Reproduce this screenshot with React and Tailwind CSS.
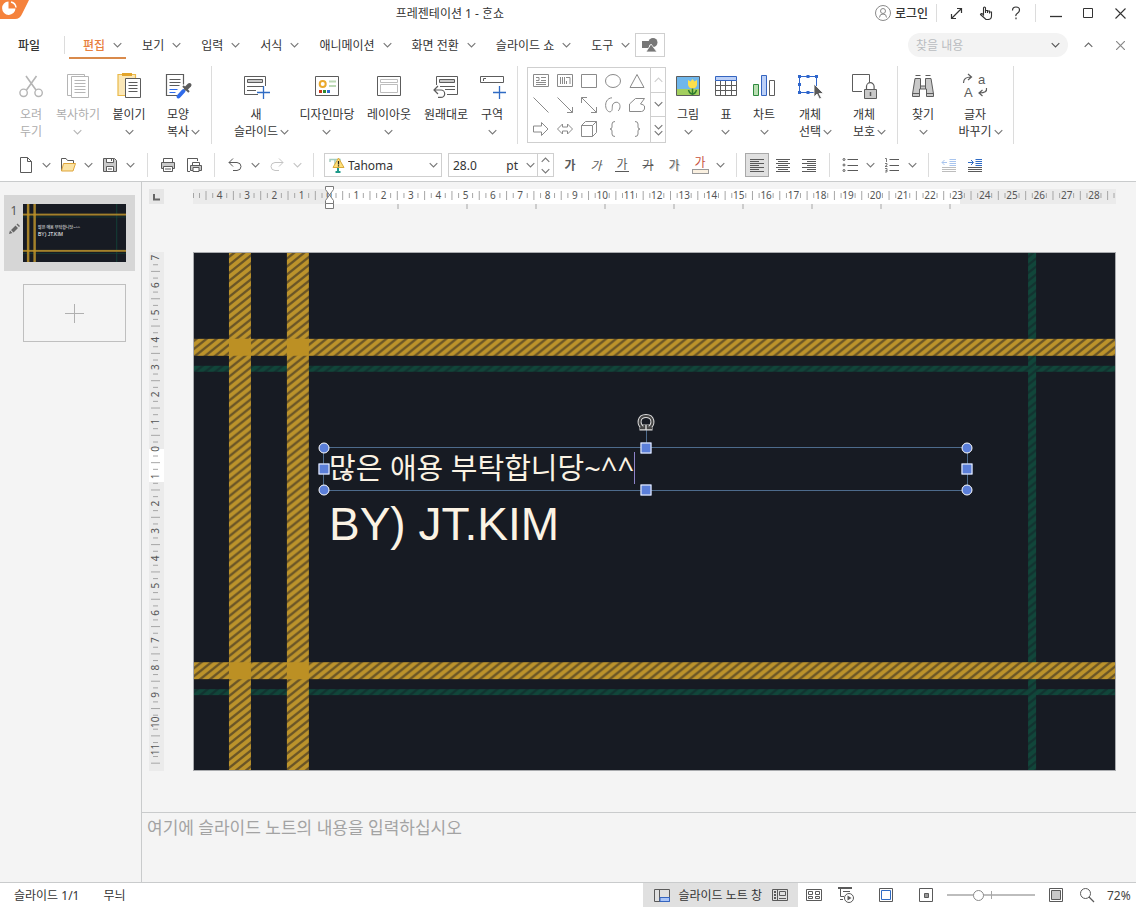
import React, { useState } from 'react';
import clsx from 'clsx';

const CM = 27.32; // one ruler unit in px

function Svg({ w = 16, h = w, className, children }) {
  return (
    <svg
      width={w}
      height={h}
      viewBox={`0 0 ${w} ${h}`}
      fill="none"
      stroke="currentColor"
      className={clsx('shrink-0', className)}
      aria-hidden="true"
    >
      {children}
    </svg>
  );
}

const Chevron = ({ className, up }) => (
  <Svg w={9} h={6} className={className}>
    <path d={up ? 'M.7 4.800l3.800-3.800 3.800 3.800' : 'M.7 1.200l3.800 3.800 3.800-3.800'} strokeWidth="1.1" />
  </Svg>
);

const Sep = ({ className }) => <div className={clsx('w-px shrink-0 bg-[#dcdcdc]', className)} />;

/* ---------- ribbon icons, 30x30 ---------- */

const BigPlus = () => <path d="M16 20.5h13M22.5 14v13" stroke="#2f6bc4" strokeWidth="1.3" />;

const ribbonIcons = {
  cut: (
    <>
      <path d="M10 4l10 14M20.5 4l-10 14" strokeWidth="1.6" />
      <circle cx="7.6" cy="20.8" r="3.7" strokeWidth="1.4" />
      <circle cx="22.6" cy="20.8" r="3.7" strokeWidth="1.4" />
    </>
  ),
  copy: (
    <>
      <path d="M8 23.5H4.5V2.5H21.5V4.5" />
      <path d="M8.5 4.5h17v21h-17z" />
      <path d="M11.5 8.5h11M11.5 11.5h11M11.5 14.5h11M11.5 17.5h11M11.5 20.5h11" />
    </>
  ),
  paste: (
    <>
      <path d="M4 2.5h17.5v21H4z" fill="#fbe8b8" stroke="#eab94a" strokeWidth="1.2" />
      <path d="M8 1h10v3H8z" fill="#e3a52b" stroke="none" />
      <path d="M11.5 6.5h15v19h-15z" fill="#fff" />
      <path d="M14.5 10.5h9M14.5 13.5h9M14.5 16.5h9M14.5 19.5h9" />
    </>
  ),
  format: (
    <>
      <path d="M14 23.5H3.5v-21h17v10" strokeWidth="1.2" />
      <path d="M6.5 7.5h11M6.5 10.5h11M6.5 13.5h10" />
      <path d="M6.5 17.5h8M6.5 20.5h6" stroke="#2f6bea" />
      <path d="M15.5 24.5l5-5.5" stroke="#2f6bea" strokeWidth="4" strokeLinecap="round" />
      <path d="M20 14l6 6" strokeWidth="2" />
      <path d="M23 16.5l3.5-3.5" strokeWidth="4" strokeLinecap="round" />
    </>
  ),
  newSlide: (
    <>
      <path d="M17 22.5H3.5v-18h21V14" />
      <path d="M6.5 7.5h15v3h-15z" fill="#c9c9c9" />
      <path d="M6 14.5h16M6 18.5h9" />
      <BigPlus />
    </>
  ),
  design: (
    <>
      <path d="M3.5 4.5h23v19h-23z" />
      <circle cx="10.7" cy="12" r="3" stroke="#eaa92c" strokeWidth="2" />
      <path d="M17 9.5h7M17 14h7" stroke="#bcd9b4" strokeWidth="2" />
      <g stroke="none">
        <path d="M7 18h3v3H7z" fill="#c8371e" />
        <path d="M11 18h3v3h-3z" fill="#2f8a2f" />
        <path d="M15 18h3v3h-3z" fill="#2f6bd0" />
      </g>
    </>
  ),
  layout: (
    <>
      <path d="M3.5 4.5h23v19h-23z" />
      <path d="M6.5 7.5h17v3h-17zM6.5 12.5h17v8h-17z" stroke="#bdbdbd" />
    </>
  ),
  reset: (
    <>
      <path d="M5.5 13V4.5h21v18H16" />
      <path d="M8.5 7.5h15v3h-15z" fill="#c9c9c9" />
      <path d="M9 14.5h15M14 17.5h10" />
      <path d="M7 14l-4 4 4 4M3 18h7a3.700 3.700 0 010 7.400H7" strokeWidth="1.2" />
    </>
  ),
  section: (
    <>
      <path d="M3.5 4.5h23v6h-23z" />
      <path d="M6.5 9V6.5h2.500" />
      <BigPlus />
    </>
  ),
  picture: (
    <>
      <path d="M3.5 4.5h23v19h-23z" fill="#6fb7ec" />
      <path d="M4 17h22v6H4z" fill="#a3cf5f" stroke="none" />
      <path d="M19.5 15v8M15.5 18c1 3 3 4 4 4s3-1 4-4" stroke="#2d7a2d" strokeWidth="1.5" />
      <path d="M15 8l2.500 1.500 2-2.500 2 2.500L24 8v5q-1 3.500-4.500 3.500T15 13z" fill="#ffe04a" stroke="none" />
    </>
  ),
  table: (
    <>
      <path d="M4.5 8.5v15h21v-15M4.5 13.5h21M4.5 18.5h21M9.5 9v14M14.5 9v14M20.5 9v14" />
      <path d="M4.5 4.5h21v4h-21z" fill="#bcd0f7" stroke="#3565c0" />
    </>
  ),
  chart: (
    <>
      <path d="M4.5 12.5h5v11h-5z" fill="#b9dfb2" stroke="#2f8a3f" />
      <path d="M12.5 3.5h5v20h-5z" fill="#bcd0f7" stroke="#3565c0" />
      <path d="M20.5 8.5h5v15h-5z" />
    </>
  ),
  select: (
    <>
      <path d="M4.5 4.5h17v16h-17z" stroke="#2f66cc" />
      <path
        d="M3 3h3v3H3zM11.5 3h3v3h-3zM20 3h3v3h-3zM3 11h3v3H3zM3 19h3v3H3zM11.5 19h3v3h-3z"
        fill="#2f66cc"
        stroke="none"
      />
      <path d="M19 12v13l3-3 2.500 5 2-1-2.500-4.500h4.500z" fill="#5a5a5a" stroke="#fff" strokeWidth=".8" />
    </>
  ),
  protect: (
    <>
      <path d="M13 19.5H3.5v-17h17v8" />
      <path d="M17.5 17v-2.500a3.800 3.800 0 017.600 0V17" strokeWidth="1.2" />
      <path d="M15.5 17.5h12v9h-12z" fill="#c9c9c9" />
      <path d="M21.5 20v4" strokeWidth="1.5" />
    </>
  ),
  find: (
    <>
      <path
        d="M7 6.5h5.500V14h5V6.500H23L25.500 22v2.500h-7V17h-7v7.500h-7V22z"
        fill="#c9c9c9"
        strokeLinejoin="round"
      />
      <path d="M7.5 3.5h5M17.5 3.5h5M4.5 21.5h7M18.5 21.5h7M12.5 14v3M17.5 14v3" />
    </>
  ),
  change: (
    <>
      <path d="M3.5 11q0-6 7.500-6M8 2l3.500 3L8 8" strokeWidth="1.2" />
      <path d="M26.5 16q1 5-7 5M22.5 18l-3.500 3 3.500 3" strokeWidth="1.2" />
      <g fill="currentColor" stroke="none" className="font-['Liberation_Sans']">
        <text x="4" y="25" fontSize="13">A</text>
        <text x="18" y="12" fontSize="13">a</text>
      </g>
    </>
  ),
};

// a string ending in "v" carries the drop-down mark on that line
const ribbonGroups = [
  {
    sep: 'ml-[11px] mr-[11px]',
    items: [
      { icon: 'cut', lines: ['오려', '두기'], w: 'w-[46px]', off: true },
      { icon: 'copy', lines: ['복사하기', 'v'], w: 'w-[48px]', off: true },
      { icon: 'paste', lines: ['붙이기', 'v'], w: 'w-[54px]' },
      { icon: 'format', lines: ['모양', '복사v'], w: 'w-[44px]' },
    ],
  },
  {
    sep: 'ml-[12px] mr-[9px]',
    items: [
      { icon: 'newSlide', lines: ['새', '슬라이드v'], w: 'w-[66px]' },
      { icon: 'design', lines: ['디자인마당', 'v'], w: 'w-[76px]' },
      { icon: 'layout', lines: ['레이아웃', 'v'], w: 'w-[48px]' },
      { icon: 'reset', lines: ['원래대로'], w: 'w-[66px]' },
      { icon: 'section', lines: ['구역', 'v'], w: 'w-[26px]' },
    ],
  },
  {
    gallery: true,
    sep: 'ml-[6px]',
    items: [
      { icon: 'picture', lines: ['그림', 'v'], w: 'w-[38px]' },
      { icon: 'table', lines: ['표', 'v'], w: 'w-[38px]' },
      { icon: 'chart', lines: ['차트', 'v'], w: 'w-[38px]' },
      { icon: 'select', lines: ['개체', '선택v'], w: 'w-[54px]' },
      { icon: 'protect', lines: ['개체', '보호v'], w: 'w-[54px]' },
    ],
  },
  {
    sep: 'ml-[11px]',
    items: [
      { icon: 'find', lines: ['찾기', 'v'], w: 'w-[50px]' },
      { icon: 'change', lines: ['글자', '바꾸기v'], w: 'w-[54px]' },
    ],
  },
];

function RibbonButton({ icon, lines, w, off }) {
  return (
    <button
      type="button"
      disabled={off}
      className={clsx('flex shrink-0 flex-col items-center pt-[9px]', w, off ? 'text-[#adadad]' : 'text-[#333]')}
    >
      <Svg w={30} className={off ? 'text-[#b5b5b5]' : 'text-[#5c5c5c]'}>
        {ribbonIcons[icon]}
      </Svg>
      <span className="mt-1 flex flex-col items-center leading-[17px] whitespace-nowrap">
        {lines.map((line) => {
          const drop = line.endsWith('v');
          const label = drop ? line.slice(0, -1) : line;
          return (
            <span key={line} className="flex h-[17px] items-center">
              {label}
              {drop && (
                <Chevron className={clsx(off ? 'text-[#b5b5b5]' : 'text-[#777]', label && 'ml-[2px] -mr-[11px]')} />
              )}
            </span>
          );
        })}
      </span>
    </button>
  );
}

const shapes = [
  ['가로 글상자', <path d="M.5 1.500h15v12H.5zM3 4.500h3v3H3M8 4.500h5M8 7.500h5M3 9.500h10M3 11.500h10" />],
  ['세로 글상자', <path d="M.5 1.500h15v12H.5zM3.500 4v7M5.500 4v7M7.500 4v7M9.500 8v3M9 4.500h4V11" />],
  ['직사각형', <path d="M.5 1.500h15v13H.5z" />],
  ['타원', <ellipse cx="8" cy="8" rx="7.5" ry="6.5" />],
  ['삼각형', <path d="M8 1.500l7 13H1z" />],
  ['직선', <path d="M.5 .5l15 15" />],
  ['화살표', <path d="M.5 .5l15 15M15.500 10v5.500H10" />],
  ['양방향 화살표', <path d="M.5 .5l15 15M15.500 10v5.500H10M.5 6V.5H6" />],
  ['곡선', <path d="M7 .8C2 1 0 6 .8 10c.6 4 4.200 6.500 6 3.500C8 11 6 7 10 5.500c3-1 5 1 5 4 0 2-.8 3.500-2 4.500" />],
  ['자유형', <path d="M.5 14.500V7l6-5.500h9l-4 5.500q3 .5 4 2v3q-1 2.500-3 2.500z" />],
  ['오른쪽 화살표', <path d="M.5 5h8V1.500l6.500 6.500-6.500 6.500V11h-8z" />],
  ['왼쪽/오른쪽 화살표', <path d="M.5 8l5-5v3h5V3l5 5-5 5v-3h-5v3z" />],
  ['정육면체', <path d="M.5 4.500h11v11H.5zM.5 4.500l4-4h11v11l-4 4M11.500 4.500l4-4" />],
  ['왼쪽 중괄호', <path d="M10 .5q-3 0-3 2.500v3q0 2-2 2 2 0 2 2v3q0 2.500 3 2.500" />],
  ['오른쪽 중괄호', <path d="M6 .5q3 0 3 2.500v3q0 2 2 2-2 0-2 2v3q0 2.500-3 2.500" />],
];

const Gallery = () => (
  <div className="mt-1 mr-[3px] flex h-[76px] w-[139px] shrink-0 border border-[#cfcfcf] text-[#8a8a8a]">
    <div className="grid w-[122px] grid-cols-5 p-px">
      {shapes.map(([name, d]) => (
        <button key={name} type="button" aria-label={name} className="grid place-items-center">
          <Svg>{d}</Svg>
        </button>
      ))}
    </div>
    <div className="grid flex-1 grid-rows-3 divide-y divide-[#cfcfcf] border-l border-[#cfcfcf]">
      <button type="button" aria-label="이전" className="grid place-items-center text-[#cfcfcf]">
        <Chevron up />
      </button>
      <button type="button" aria-label="다음" className="grid place-items-center text-[#777]">
        <Chevron />
      </button>
      <button type="button" aria-label="자세히" className="grid place-content-center text-[#777]">
        <Chevron />
        <Chevron />
      </button>
    </div>
  </div>
);

/* ---------- title and menu ---------- */

const WinButton = ({ label, w = 'w-[32px]', children, className }) => (
  <button type="button" aria-label={label} className={clsx('grid h-6 shrink-0 place-items-center', w, className)}>
    {children}
  </button>
);

const TitleBar = () => (
  <header className="flex h-[27px] items-center pb-px">
    <Svg w={29} h={20} className="self-start">
      <path d="M0 0h29l-7 14q-2 5-7 5H0z" fill="#f5823c" stroke="none" />
      <path d="M8.500 1.500a6.700 6.700 0 107 7H8.500z" fill="#fff" stroke="none" />
      <path d="M11 2q4.500 1 5 5.500" stroke="#fff" strokeWidth="1.5" />
    </Svg>
    <h1 className="min-w-0 flex-1 truncate text-center">프레젠테이션 1 - ᄒᆞᆫ쇼</h1>
    <button type="button" className="ml-1 flex items-center gap-1">
      <Svg className="text-[#8a8a8a]">
        <circle cx="8" cy="8" r="7.5" />
        <circle cx="8" cy="6" r="2.5" />
        <path d="M4.500 12.500q0-3.500 3.500-3.500t3.500 3.500" />
      </Svg>
      <span className="font-medium">로그인</span>
    </button>
    <Sep className="mx-[8px] h-[18px]" />
    <WinButton label="전체 화면" w="w-[30px]" className="-ml-1">
      <Svg w={13}>
        <path d="M1.500 11.500l10-10M7 1.500h4.500V6M1.500 7v4.500H6" strokeWidth="1.2" />
      </Svg>
    </WinButton>
    <WinButton label="터치" w="w-[30px]">
      <Svg w={14}>
        <path
          d="M4.500 9V2q0-1 1-1t1 1v5V4.500h2V7 5h2v2.500V6h2V10q0 3.500-3.500 3.500H7L1.500 8.500Q2.500 6.500 4.500 9z"
          strokeWidth="1.1"
        />
      </Svg>
    </WinButton>
    <WinButton label="도움말" w="w-[30px]">
      <Svg w={10} h={14}>
        <path d="M1.500 4.500Q1.500 1 5 1t3.500 3Q8.500 6 6.500 7.200T5 10M5 11.500v1.700" strokeWidth="1.2" />
      </Svg>
    </WinButton>
    <Sep className="mx-1 h-[18px]" />
    <WinButton label="최소화">
      <Svg w={12}>
        <path d="M0 9.5h12" strokeWidth="1.3" />
      </Svg>
    </WinButton>
    <WinButton label="최대화">
      <Svg w={11}>
        <path d="M.5 .5h9v9h-9z" />
      </Svg>
    </WinButton>
    <WinButton label="닫기">
      <Svg w={11}>
        <path d="M.5 .5l10 10M10.500 .5l-10 10" strokeWidth="1.1" />
      </Svg>
    </WinButton>
  </header>
);

const menus = ['편집', '보기', '입력', '서식', '애니메이션', '화면 전환', '슬라이드 쇼', '도구'];

const MenuBar = () => {
  const [active, setActive] = useState('편집');
  return (
    <nav className="flex h-9 items-center">
      <button type="button" className="w-[58px] font-medium">파일</button>
      <Sep className="ml-[6px] mr-1 h-[18px]" />
      <div className="flex gap-[2px]">
        {menus.map((m) => (
          <button
            key={m}
            type="button"
            onClick={() => setActive(m)}
            className={clsx(
              'flex h-7 items-center gap-2 border-y-2 border-t-transparent pl-[14px] pr-1 whitespace-nowrap',
              active === m ? 'border-b-[#d98a4b] font-medium text-[#e8813f]' : 'border-b-transparent'
            )}
          >
            {m}
            <Chevron className="text-[#777]" />
          </button>
        ))}
      </div>
      <button
        type="button"
        aria-label="도형"
        className="ml-px grid h-6 w-[30px] place-items-center border border-[#cfcfcf] text-[#777]"
      >
        <Svg w={16} h={14}>
          <g fill="currentColor" stroke="none">
            <path d="M0 3h7v7H0z" />
            <circle cx="11" cy="4.5" r="4.5" />
            <path d="M9 6l6 8H4z" stroke="#fff" strokeWidth=".8" />
          </g>
        </Svg>
      </button>
      <div className="ml-auto flex h-6 w-[160px] items-center rounded-full bg-[#f3f3f3] px-2">
        <input
          type="text"
          aria-label="찾을 내용"
          placeholder="찾을 내용"
          className="min-w-0 flex-1 bg-transparent outline-none placeholder:text-[#b9bcc0]"
        />
        <Chevron className="text-[#555]" />
      </div>
      <WinButton label="접기" className="ml-1 text-[#666]">
        <Chevron up />
      </WinButton>
      <WinButton label="문서 닫기" className="text-[#888]">
        <Svg w={9}>
          <path d="M0 0l9 9M9 0L0 9" strokeWidth="1.2" />
        </Svg>
      </WinButton>
    </nav>
  );
};

/* ---------- formatting toolbar ---------- */

const Tool = ({ label, w = 'w-[26px]', children, className }) => (
  <button
    type="button"
    aria-label={label}
    className={clsx('grid h-6 shrink-0 place-items-center text-[#5a5a5a]', w, className)}
  >
    {children}
  </button>
);

const Drop = ({ label, color = 'text-[#777]' }) => (
  <button
    type="button"
    aria-label={`${label} 목록`}
    className={clsx('grid h-6 w-[14px] shrink-0 place-items-center', color)}
  >
    <Chevron />
  </button>
);

const barIcons = {
  newDoc: <path d="M2.500 .5h7l4 4v11h-11zM9.500 .5v4h4" />,
  open: (
    <>
      <path d="M1.500 14V1.500H6l1.500 2h6V6" />
      <path d="M3.500 6.500h12l-2.500 7.500H1.500z" fill="#fbe3a4" stroke="#dfa63c" />
    </>
  ),
  save: (
    <>
      <path d="M1.500 1.500h11l2 2v11h-13z" fill="#c9c9c9" />
      <path d="M4.500 1.500h7v4h-7zM4.500 9.500h7v5h-7z" fill="#fff" />
      <path d="M9.500 2v2M6 12h4" />
    </>
  ),
  print: (
    <>
      <path d="M3.500 6V1.500h9V6" />
      <path d="M1.500 5.500h13v6h-13z" fill="#c9c9c9" />
      <path d="M3.500 9.500h9v5h-9z" fill="#fff" />
      <path d="M5 12h6" />
    </>
  ),
  preview: (
    <>
      <path d="M4 14.500H1.500v-13h10V4" />
      <path d="M6.500 8V5.500h7V8" fill="#fff" />
      <path d="M4.500 8.500h11v5h-11z" fill="#c9c9c9" />
      <path d="M7 10.500h6v4H7z" fill="#fff" />
    </>
  ),
  undo: <path d="M6 1.500L2 5.500l4 4M2 5.500h8q4 .3 4 4t-4 4H6" />,
  redo: <path d="M10 1.500l4 4-4 4M14 5.500H6q-4 .3-4 4t4 4h4" />,
  left: <path d="M1 2.500h14M1 4.500h9M1 6.500h14M1 8.500h9M1 10.500h14M1 12.500h9M1 14.500h14" />,
  center: <path d="M1 2.500h14M3 4.500h10M1 6.500h14M3 8.500h10M1 10.500h14M3 12.500h10M1 14.500h14" />,
  right: <path d="M1 2.500h14M6 4.500h9M1 6.500h14M6 8.500h9M1 10.500h14M6 12.500h9M1 14.500h14" />,
  bullets: (
    <>
      <circle cx="2" cy="2.5" r="1" />
      <circle cx="2" cy="8" r="1" />
      <circle cx="2" cy="13.5" r="1" />
      <path d="M5.500 2.500H16M5.500 8.500H16M5.500 13.500H16" />
    </>
  ),
  numbers: (
    <>
      <path d="M1 1.500h1.500V5M1 6.500h2V8L1 9.500h2.500M1 11.500h2V15H1M1.500 13.500H3" strokeWidth=".8" />
      <path d="M5.500 2.500H15M5.500 8.500H15M5.500 13.500H15" />
    </>
  ),
  outdent: (
    <>
      <path d="M8.500 2.500H15M8.500 4.500H15M8.500 6.500H15M8.500 8.500H15M6 5.500H1M3.500 3L1 5.500 3.500 8" stroke="#a9c5ee" />
      <path d="M1 10.500h14M1 12.500h14M1 14.500h14" stroke="#bdbdbd" />
    </>
  ),
  indent: (
    <>
      <path d="M8.500 2.500H15M8.500 4.500H15M8.500 6.500H15M8.500 8.500H15M1 5.500h5M4 3l2.500 2.500L4 8" stroke="#2f6bc4" />
      <path d="M1 10.500h14M1 12.500h14M1 14.500h14" />
    </>
  ),
};

const BarIcon = ({ name }) => <Svg>{barIcons[name]}</Svg>;

const Toolbar = () => {
  const [font, setFont] = useState('Tahoma');
  const [size, setSize] = useState('28.0');
  return (
    <div className="flex h-[35px] items-center overflow-hidden border-b border-[#c9cbcc] pt-[2px] pl-[13px]">
      <div className="flex gap-[2px]">
        {[['newDoc', '새 문서'], ['open', '불러오기'], ['save', '저장']].map(([icon, label]) => (
          <div key={icon} className="flex">
            <Tool label={label}><BarIcon name={icon} /></Tool>
            <Drop label={label} />
          </div>
        ))}
      </div>
      <Sep className="mr-[7px] ml-[10px] h-6" />
      <Tool label="인쇄"><BarIcon name="print" /></Tool>
      <Tool label="미리 보기"><BarIcon name="preview" /></Tool>
      <Sep className="mx-[7px] h-6" />
      <Tool label="되돌리기"><BarIcon name="undo" /></Tool>
      <Drop label="되돌리기" />
      <Tool label="다시 실행" className="ml-[2px] opacity-35"><BarIcon name="redo" /></Tool>
      <Drop label="다시 실행" color="text-[#c4c4c4]" />
      <Sep className="mr-[10px] ml-[9px] h-6" />

      <div className="flex h-6 w-[118px] shrink-0 items-center border border-[#cfcfcf] pl-1 pr-[3px]">
        <Svg w={16}>
          <path d="M1 5V2.500h10V5M6 3v5" stroke="#a4cdbf" strokeWidth="1.5" />
          <path d="M9 11v4M6.500 15h5" stroke="#1f9a8a" strokeWidth="2" />
          <path d="M9.500 1l5.500 9.500H4z" fill="#ffe07a" stroke="#d9a93a" />
          <path d="M9.500 4v3.500M9.500 8.300v1.200" stroke="#222" strokeWidth="1.3" />
        </Svg>
        <select
          aria-label="글꼴"
          value={font}
          onChange={(e) => setFont(e.target.value)}
          className="ml-[3px] min-w-0 flex-1 appearance-none bg-transparent outline-none"
        >
          <option>Tahoma</option>
          <option>맑은 고딕</option>
        </select>
        <Chevron className="text-[#777]" />
      </div>

      <div className="ml-[6px] flex h-6 w-[106px] shrink-0 items-center border border-[#cfcfcf] pl-1">
        <input
          type="text"
          aria-label="글자 크기"
          value={size}
          onChange={(e) => setSize(e.target.value)}
          className="min-w-0 flex-1 bg-transparent outline-none"
        />
        <span className="mr-[5px]">pt</span>
        <Drop label="글자 크기" />
        <div className="grid h-full w-4 grid-rows-2 border-l border-[#cfcfcf] text-[#777]">
          <button type="button" aria-label="크게" className="grid place-items-center"><Chevron up /></button>
          <button type="button" aria-label="작게" className="grid place-items-center"><Chevron /></button>
        </div>
      </div>

      <Tool label="진하게" className="ml-[3px] font-bold">가</Tool>
      <Tool label="기울임" className="italic">가</Tool>
      <Tool label="밑줄"><span className="border-b border-[#5a5a5a] px-px leading-[13px]">가</span></Tool>
      <Tool label="취소선" className="line-through">가</Tool>
      <Tool label="그림자"><span className="text-shadow-[1px_1px_0_#ccc]">가</span></Tool>
      <Tool label="글자 색">
        <span className="flex flex-col items-center leading-[13px] text-[#c8513c]">
          가
          <span className="h-[5px] w-[17px] border border-[#999] bg-[#faf0e0]" />
        </span>
      </Tool>
      <Drop label="글자 색" />
      <Sep className="mr-[7px] ml-[9px] h-6" />
      <Tool label="왼쪽 정렬" w="w-[24px]" className="mx-px border border-[#a9a9a9] bg-[#e0e0e0]">
        <BarIcon name="left" />
      </Tool>
      <Tool label="가운데 정렬"><BarIcon name="center" /></Tool>
      <Tool label="오른쪽 정렬"><BarIcon name="right" /></Tool>
      <Sep className="mx-[7px] h-6" />
      <Tool label="글머리표"><BarIcon name="bullets" /></Tool>
      <Drop label="글머리표" />
      <Tool label="번호 매기기" className="ml-[2px]"><BarIcon name="numbers" /></Tool>
      <Drop label="번호 매기기" />
      <Sep className="mr-[7px] ml-[9px] h-6" />
      <Tool label="내어쓰기"><BarIcon name="outdent" /></Tool>
      <Tool label="들여쓰기"><BarIcon name="indent" /></Tool>
    </div>
  );
};

/* ---------- slide ---------- */

const Plaid = ({ id, className }) => {
  const gold = `url(#${id}-gold)`;
  const green = `url(#${id}-green)`;
  return (
    <svg viewBox="0 0 922 518" preserveAspectRatio="none" className={clsx('block', className)} aria-hidden="true">
      <defs>
        <pattern id={`${id}-gold`} width="10" height="8" patternUnits="userSpaceOnUse">
          <rect width="10" height="8" fill="#bc932b" />
          <path d="M-2 9.600L12 -1.600M-2 1.600L2 -1.600M8 9.600L12 6.400" stroke="#695426" strokeWidth="2.3" />
        </pattern>
        <pattern id={`${id}-green`} width="10" height="8" patternUnits="userSpaceOnUse">
          <rect width="10" height="8" fill="#11463a" />
          <path d="M-2 9.600L12 -1.600M-2 1.600L2 -1.600M8 9.600L12 6.400" stroke="#123330" strokeWidth="2.3" />
        </pattern>
      </defs>
      <rect width="922" height="518" fill="#171b23" />
      <rect y="113" width="922" height="6" fill={green} />
      <rect y="437" width="922" height="6" fill={green} />
      <rect x="835" width="8" height="518" fill={green} />
      <rect y="86" width="922" height="17" fill={gold} />
      <rect y="410" width="922" height="17" fill={gold} />
      <rect x="35" width="22" height="518" fill={gold} />
      <rect x="93" width="22" height="518" fill={gold} />
      <path d="M35 86h22v17H35zM93 86h22v17H93zM35 410h22v17H35zM93 410h22v17H93z" fill="#bc9024" />
    </svg>
  );
};

const round = 'absolute size-[11px] -translate-x-1/2 -translate-y-1/2 rounded-full border border-white bg-[#5b7fd9]';
const square = 'absolute size-[11px] -translate-x-1/2 -translate-y-1/2 border border-white bg-[#5b7fd9]';

const Slide = () => (
  <div className="relative aspect-[923/519] min-w-0 flex-1 border border-[#a9abae] text-[#fbf3e4]">
    <Plaid id="slide" className="size-full" />
    <div className="absolute top-[194px] left-[129px] flex h-[44px] w-[645px] items-center border border-[#4d6b8c] pb-[2px]">
      <p className="pl-[5px] text-[29px] leading-[40px] whitespace-nowrap">많은 애용 부탁합니당~^^</p>
      <span className="h-8 w-px bg-[#8d83c9]" />
      <span className={clsx(round, 'top-0 left-0')} />
      <span className={clsx(round, 'top-0 left-full')} />
      <span className={clsx(round, 'top-full left-0')} />
      <span className={clsx(round, 'top-full left-full')} />
      <span className={clsx(square, 'top-1/2 left-0')} />
      <span className={clsx(square, 'top-1/2 left-full')} />
      <span className="absolute bottom-full left-1/2 h-5 w-px bg-[#4d6b8c]" />
      <span className={clsx(square, 'top-0 left-1/2')} />
      <span className={clsx(square, 'top-full left-1/2')} />
      <Svg w={18} className="absolute -top-[35px] left-1/2 -translate-x-1/2">
        <path d="M5.500 14.500C1 11 1.500 3 9 3s8 8 3.500 11.500M2.500 15.500h5v-4M15.500 15.500h-5v-4" stroke="#ddd" strokeWidth="4" />
        <path d="M5.500 14.500C1 11 1.500 3 9 3s8 8 3.500 11.500M3 15.200h4.300v-3.500M15 15.200h-4.300v-3.500" stroke="#444" strokeWidth="2" />
      </Svg>
    </div>
    <p className="absolute top-[243px] left-[135px] font-['Liberation_Sans',sans-serif] text-[46px] leading-[56px] whitespace-nowrap">
      BY) JT.KIM
    </p>
  </div>
);

const range = (a, b) => Array.from({ length: b - a + 1 }, (_, i) => a + i);

const HRuler = () => (
  <svg className="h-[15px] min-w-0 flex-1 overflow-visible" aria-hidden="true">
    <rect width="100%" height="15" fill="#ebebeb" />
    <rect x="136" width="631" height="15" fill="#fff" />
    {range(-4, 28).map((n) => {
      const x = 136 + n * CM;
      return (
        <g key={n}>
          <text x={x} y="10" fontSize="10" textAnchor="middle" fill="#555">{Math.abs(n)}</text>
          <path d={`M${x - 7} 4v5M${x + 7} 4v5M${x + CM / 2} 2v9`} stroke="#a6a6a6" />
        </g>
      );
    })}
    <path d="M.5 4v5M6.500 4v5M13 2v9M921 4v5" stroke="#a6a6a6" />
    {range(1, 9).map((n) => (
      <path key={n} d={`M${136 + n * 69} 15v5`} stroke="#a6a6a6" />
    ))}
    <g fill="#fff" stroke="#7a7a7a">
      <path d="M132.500 -2.500h8v3l-4 5.500-4-5.500z" />
      <path d="M132.500 14.500v-3L136.500 6l4 5.500v3z" />
      <path d="M132.500 14.500h8v5h-8z" />
    </g>
  </svg>
);

const VRuler = () => (
  <svg className="w-[15px] shrink-0 self-stretch" aria-hidden="true">
    <rect width="15" height="100%" fill="#ebebeb" />
    <rect y="197" width="15" height="33" fill="#fff" />
    {range(-7, 11).map((n) => {
      const y = 197 + n * CM;
      return (
        <g key={n}>
          <text
            transform={`translate(10 ${y}) rotate(-90)`}
            fontSize="10"
            textAnchor="middle"
            fill="#555"
          >
            {Math.abs(n)}
          </text>
          <path d={`M4 ${y - 7}h5M4 ${y + 7}h5M2 ${y + CM / 2}h9`} stroke="#a6a6a6" />
        </g>
      );
    })}
  </svg>
);

const SlidePanel = () => (
  <aside className="flex w-[142px] shrink-0 flex-col gap-[13px] border-r border-[#c9cbcc] pt-[13px]">
    <button type="button" className="ml-1 flex h-[76px] w-[131px] gap-[2px] bg-[#d6d6d6] py-[9px] pl-[3px]">
      <span className="flex w-[14px] flex-col items-center leading-[14px] text-[#555]">
        1
        <Svg w={12} className="mt-[5px]">
          <path d="M1 11l1-3.500 2.500 2.500zM3 7l4.500-4.500L10 5 5.500 9.500zM8.500 1.500l1-1L12 3l-1 1z" fill="#666" stroke="none" />
        </Svg>
      </span>
      <span className="relative block h-[58px] w-[103px]">
        <Plaid id="thumb" className="size-full" />
        <span className="absolute top-[21px] left-[15px] flex flex-col items-start text-[5px] leading-[6px] whitespace-nowrap text-white">
          <span className="text-[4px]">많은 애용 부탁합니당~^^</span>
          <span className="font-['Liberation_Sans',sans-serif]">BY) JT.KIM</span>
        </span>
      </span>
    </button>
    <button
      type="button"
      aria-label="새 슬라이드 추가"
      className="ml-[23px] grid h-[58px] w-[103px] place-items-center border border-[#bfbfbf] text-[#b0b0b0]"
    >
      <Svg w={19}>
        <path d="M0 9.500h19M9.500 0v19" />
      </Svg>
    </button>
  </aside>
);

/* ---------- status bar ---------- */

const ViewButton = ({ label, w = 'w-[32px]', children }) => (
  <button type="button" aria-label={label} className={clsx('grid h-full shrink-0 place-items-center text-[#5a5a5a]', w)}>
    <Svg>{children}</Svg>
  </button>
);

const StatusBar = () => {
  const [zoom, setZoom] = useState(34);
  return (
    <footer className="flex h-[25px] items-center border-t border-[#c9cbcc] bg-white pl-[14px]">
      <span>슬라이드 1/1</span>
      <span className="ml-6">무늬</span>
      <div className="ml-auto flex h-full items-center bg-[#e0e0e0]">
        <button type="button" className="flex h-full items-center gap-2 pl-[11px] text-[#333]">
          <Svg w={16} className="text-[#5a5a5a]">
            <path d="M.5 2.500h15v12H.5zM5.500 2.500v12" />
            <path d="M6 10.500h9.500v4H6z" fill="#a9c4f7" stroke="#3565c0" />
          </Svg>
          슬라이드 노트 창
        </button>
        <ViewButton label="기본 보기" w="w-[36px]">
          <path d="M.5 2.500h15v11H.5zM5.500 2.500v11M7.500 4.500h6v4h-6zM7 11.500h7" />
          <path d="M2 5h2M2 8h2M2 11h2" strokeWidth="2" />
        </ViewButton>
      </div>
      <ViewButton label="여러 슬라이드">
        <path d="M.5 2.500h15v11H.5zM2.500 4.500h4v3h-4zM9.500 4.500h4v3h-4zM2.500 9.500h4v2h-4zM9.500 9.500h4v2h-4z" />
      </ViewButton>
      <ViewButton label="슬라이드 쇼">
        <path d="M0 1h14" strokeWidth="2" />
        <path d="M2.500 2v7.500H6M5 4.500h7M2 12.500h3" />
        <circle cx="11" cy="11" r="4.5" fill="#fff" />
        <path d="M9.500 8.500v5l4-2.500z" fill="currentColor" stroke="none" />
      </ViewButton>
      <ViewButton label="창 맞춤" w="w-[48px]">
        <path d="M1.500 1.500h13v13h-13z" />
        <path d="M3.500 3.500h9v9h-9z" stroke="#2f6bc4" fill="#fff" />
      </ViewButton>
      <ViewButton label="축소">
        <path d="M1.500 1.500h13v13h-13z" />
        <path d="M6.500 6.500h4v4h-4z" fill="#999" />
      </ViewButton>
      <div className="relative ml-[5px] flex items-center">
        <input
          type="range"
          aria-label="확대/축소 비율"
          value={zoom}
          onChange={(e) => setZoom(Number(e.target.value))}
          className="h-[2px] w-[88px] appearance-none bg-[#bdbdbd] [&::-webkit-slider-thumb]:size-[11px] [&::-webkit-slider-thumb]:appearance-none [&::-webkit-slider-thumb]:rounded-full [&::-webkit-slider-thumb]:border [&::-webkit-slider-thumb]:border-[#8a8a8a] [&::-webkit-slider-thumb]:bg-white"
        />
        <span className="pointer-events-none absolute left-1/2 h-2 w-px bg-[#a6a6a6]" />
      </div>
      <ViewButton label="확대" w="w-[42px]">
        <path d="M1.500 1.500h13v13h-13z" />
        <path d="M3.500 3.500h9v9h-9z" fill="#c9c9c9" />
      </ViewButton>
      <ViewButton label="확대/축소" w="w-[20px]">
        <circle cx="6.5" cy="6.5" r="5" />
        <path d="M10 10l5 5" strokeWidth="1.3" />
      </ViewButton>
      <span className="mr-1 ml-[10px] w-[25px] text-[#444]">72%</span>
    </footer>
  );
};

export default function App() {
  return (
    <div className="flex min-h-screen flex-col overflow-x-hidden bg-white font-['Noto_Sans','Noto_Sans_CJK_KR',sans-serif] text-[12px] leading-[17px] text-[#333]">
      <TitleBar />
      <MenuBar />
      <div className="flex h-[84px] pl-2">
        {ribbonGroups.map((g, i) => (
          <React.Fragment key={i}>
            {g.gallery && <Gallery />}
            {g.items.map((item) => (
              <RibbonButton key={item.icon} {...item} />
            ))}
            <Sep className={clsx('mt-[3px] h-[78px]', g.sep)} />
          </React.Fragment>
        ))}
      </div>
      <Toolbar />
      <div className="flex flex-1 bg-[#f4f4f4]">
        <SlidePanel />
        <main className="flex min-w-0 flex-1 flex-col">
          <div className="flex-1 pt-[7px] pr-5 pl-[7px]">
            <div className="flex gap-[29px]">
              <Svg w={15}>
                <rect width="15" height="15" fill="#e6e6e6" stroke="none" />
                <path d="M5 5v5.500h6" stroke="#666" strokeWidth="2" />
              </Svg>
              <HRuler />
            </div>
            <div className="mt-12 flex items-start gap-[29px]">
              <VRuler />
              <Slide />
            </div>
          </div>
          <div className="flex h-[70px] border-t border-[#c9cbcc]">
            <textarea
              aria-label="슬라이드 노트"
              placeholder="여기에 슬라이드 노트의 내용을 입력하십시오"
              className="w-full resize-none bg-transparent px-[5px] pt-[3px] text-[17px] leading-6 outline-none placeholder:text-[#a3a3a3]"
            />
          </div>
        </main>
      </div>
      <StatusBar />
    </div>
  );
}
